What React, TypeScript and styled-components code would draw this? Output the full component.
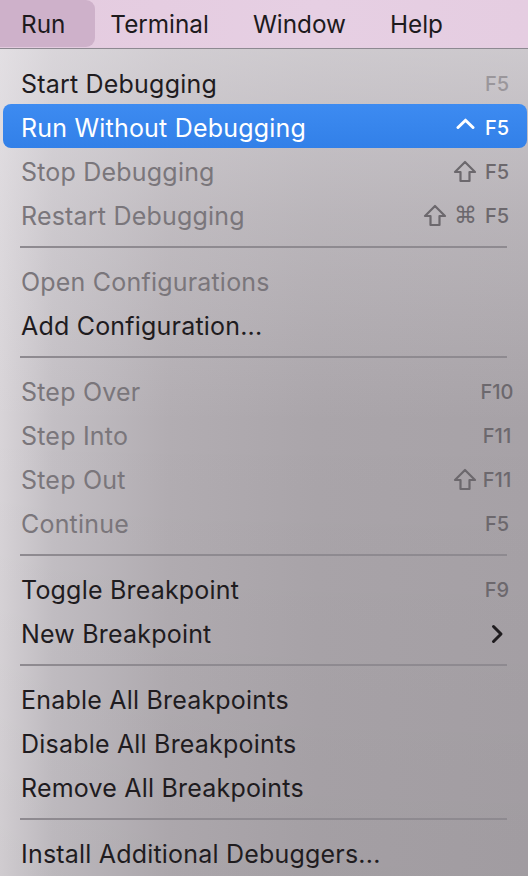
import React from "react";
import styled, { createGlobalStyle } from "styled-components";

const Global = createGlobalStyle`
  html, body { margin: 0; padding: 0; }
  body {
    width: 528px;
    height: 876px;
    overflow: hidden;
    font-family: Inter, "Noto Sans", "Liberation Sans", sans-serif;
    -webkit-font-smoothing: antialiased;
  }
`;

const Screen = styled.div`
  width: 528px;
  height: 876px;
  display: flex;
  flex-direction: column;
  overflow: hidden;
`;

const MenuBar = styled.div`
  height: 48px;
  flex: none;
  display: flex;
  align-items: flex-start;
  background: linear-gradient(90deg, #e4cbdf 0%, #e6cfe3 60%, #e5cde1 100%);
  border-bottom: 1px solid #8d8991;
`;

const BarItem = styled.div<{ $active?: boolean }>`
  display: flex;
  align-items: center;
  height: 47px;
  padding: ${(p) => (p.$active ? "0 30px 0 21px" : "0 22px")};
  margin-right: ${(p) => (p.$active ? "-7px" : "0")};
  font-size: 24.3px;
  color: #1d1a1d;
  background: ${(p) => (p.$active ? "#ceb1ca" : "transparent")};
  border-radius: 0 9px 9px 0;
`;

const Panel = styled.div`
  flex: 1;
  padding-top: 11px;
  background:
    linear-gradient(180deg, rgba(235,232,236,0.55) 0%, rgba(235,232,236,0.25) 20%, rgba(235,232,236,0) 45%, rgba(0,0,0,0.04) 100%),
    linear-gradient(90deg, #d8d4d8 0%, #c3bfc4 10%, #b2adb2 32%, #aaa5aa 60%, #a7a2a7 100%);
  display: flex;
  flex-direction: column;
`;

const Row = styled.div<{ $selected?: boolean; $disabled?: boolean }>`
  height: 44px;
  box-sizing: border-box;
  flex: none;
  display: flex;
  align-items: center;
  margin: 0 1px 0 3px;
  padding: 3px 12px 0 18px;
  border-radius: 8px;
  font-size: 25px;
  letter-spacing: 0.2px;
  background: ${(p) => (p.$selected ? "linear-gradient(180deg, #3d8bf1 0%, #3280e8 100%)" : "transparent")};
  color: ${(p) => (p.$selected ? "#ffffff" : p.$disabled ? "#7a767b" : "#1f1c1f")};
`;

const Label = styled.span`
  flex: 1;
  white-space: nowrap;
`;

const Shortcut = styled.span<{ $selected?: boolean; $light?: boolean }>`
  display: flex;
  align-items: center;
  font-size: 20px;
  font-weight: 500;
  letter-spacing: 0;
  color: ${(p) => (p.$selected ? "#ffffff" : p.$light ? "#9a969b" : "#6c686d")};
`;

const Mods = styled.span`
  display: flex;
  align-items: center;
  gap: 7px;
  margin-right: 2px;
`;

const KeyCol = styled.span`
  width: 36px;
  display: flex;
  justify-content: center;
`;

const Cmd = styled.span`
  font-family: "DejaVu Sans", sans-serif;
  font-size: 23px;
  font-weight: 400;
  line-height: 1;
`;

const Separator = styled.div`
  height: 22px;
  flex: none;
  display: flex;
  align-items: center;
  padding: 0 21px 0 20px;
  &::after {
    content: "";
    flex: 1;
    height: 2px;
    background: #8e8a90;
  }
`;

const ShiftIcon = () => (
  <svg width="24" height="23" viewBox="0 0 24 23" fill="none">
    <path
      d="M12 2 L22 12 H16.5 V21 H7.5 V12 H2 Z"
      stroke="currentColor"
      strokeWidth="2.2"
      strokeLinejoin="round"
    />
  </svg>
);

const CaretIcon = () => (
  <svg width="19" height="11" viewBox="0 0 19 11" fill="none" style={{ marginTop: -9, marginRight: 2 }}>
    <path d="M2 9.5 L9.5 2.2 L17 9.5" stroke="currentColor" strokeWidth="3" strokeLinecap="round" strokeLinejoin="round" />
  </svg>
);

const Chevron = () => (
  <svg width="13" height="20" viewBox="0 0 13 20" fill="none">
    <path d="M2.5 2.5 L10 10 L2.5 17.5" stroke="#1f1c1f" strokeWidth="3" strokeLinecap="round" strokeLinejoin="round" />
  </svg>
);

type Item =
  | { sep: true }
  | {
      sep?: false;
      label: string;
      disabled?: boolean;
      selected?: boolean;
      mods?: React.ReactNode;
      keyText?: React.ReactNode;
      light?: boolean;
    };

const items: Item[] = [
  { label: "Start Debugging", keyText: "F5", light: true },
  { label: "Run Without Debugging", selected: true, mods: <CaretIcon />, keyText: "F5" },
  { label: "Stop Debugging", disabled: true, mods: <ShiftIcon />, keyText: "F5" },
  { label: "Restart Debugging", disabled: true, mods: <><ShiftIcon /><Cmd>⌘</Cmd></>, keyText: "F5" },
  { sep: true },
  { label: "Open Configurations", disabled: true },
  { label: "Add Configuration..." },
  { sep: true },
  { label: "Step Over", disabled: true, keyText: "F10" },
  { label: "Step Into", disabled: true, keyText: "F11" },
  { label: "Step Out", disabled: true, mods: <ShiftIcon />, keyText: "F11" },
  { label: "Continue", disabled: true, keyText: "F5" },
  { sep: true },
  { label: "Toggle Breakpoint", keyText: "F9" },
  { label: "New Breakpoint", keyText: <Chevron /> },
  { sep: true },
  { label: "Enable All Breakpoints" },
  { label: "Disable All Breakpoints" },
  { label: "Remove All Breakpoints" },
  { sep: true },
  { label: "Install Additional Debuggers..." },
];

export default function App() {
  return (
    <Screen>
      <Global />
      <MenuBar>
        <BarItem $active>Run</BarItem>
        <BarItem>Terminal</BarItem>
        <BarItem>Window</BarItem>
        <BarItem>Help</BarItem>
      </MenuBar>
      <Panel>
        {items.map((it, i) =>
          it.sep ? (
            <Separator key={i} />
          ) : (
            <Row key={i} $selected={it.selected} $disabled={it.disabled}>
              <Label>{it.label}</Label>
              {it.keyText && (
                <Shortcut $selected={it.selected} $light={it.light}>
                  {it.mods && <Mods>{it.mods}</Mods>}
                  <KeyCol>{it.keyText}</KeyCol>
                </Shortcut>
              )}
            </Row>
          )
        )}
      </Panel>
    </Screen>
  );
}
